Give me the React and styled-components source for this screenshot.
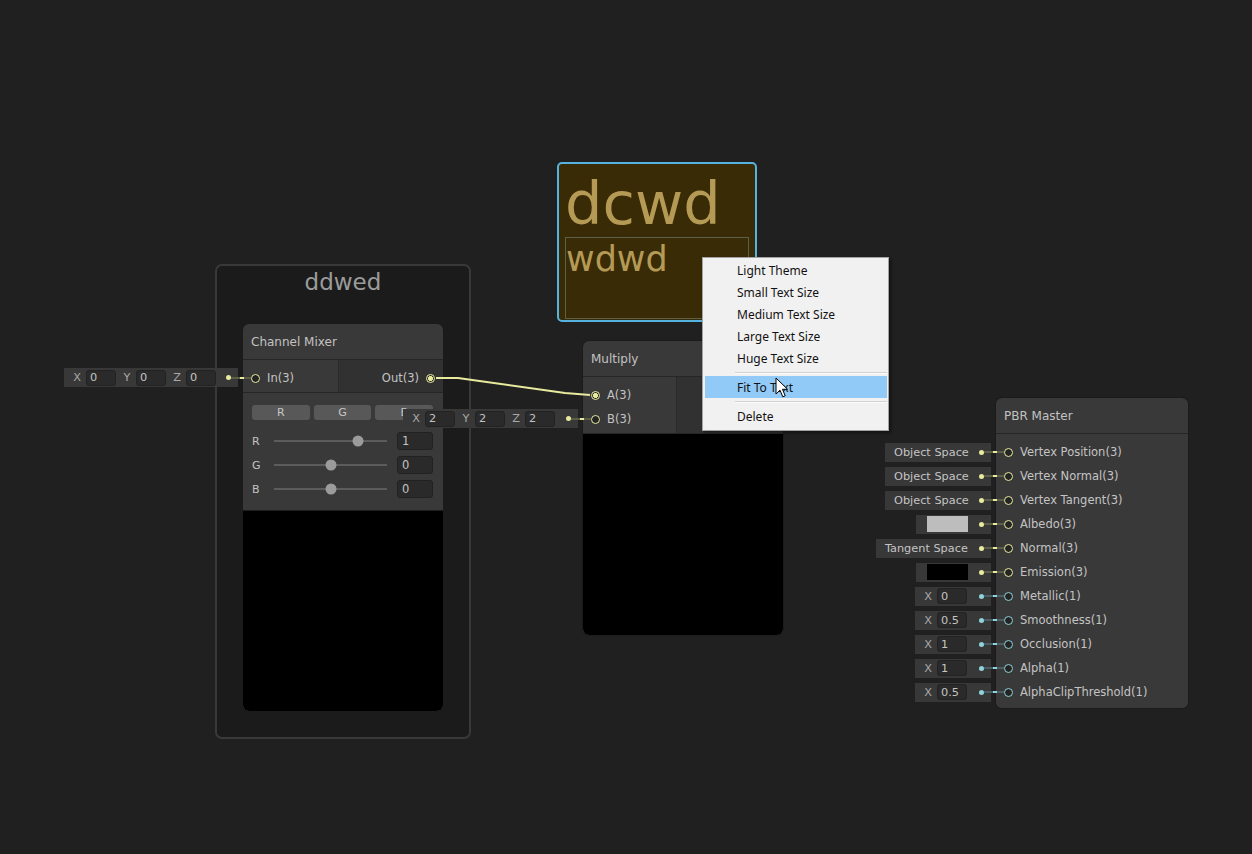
import React from "react";
import styled, { createGlobalStyle } from "styled-components";

const YELLOW = "#e8eb9e";
const YELLOW_DIM = "#5d5e48";
const CYAN = "#8fd3dc";
const CYAN_DIM = "#4a5e61";

const GlobalStyle = createGlobalStyle`
  html, body { margin: 0; padding: 0; background: #202020; }
  body { font-family: "DejaVu Sans", Verdana, sans-serif; }
  *, *::before, *::after { box-sizing: border-box; }
`;

const Canvas = styled.div`
  position: relative;
  width: 1252px;
  height: 854px;
  overflow: hidden;
  background: #202020;
  font-family: "DejaVu Sans", Verdana, sans-serif;
  color: #c4c4c4;
`;

/* ---------- group ---------- */
const Group = styled.div`
  position: absolute;
  left: ${(p) => p.$x}px;
  top: ${(p) => p.$y}px;
  width: ${(p) => p.$w}px;
  height: ${(p) => p.$h}px;
  background: #1b1b1b;
  border: 2px solid #393939;
  border-radius: 7px;
  display: flex;
  justify-content: center;
  padding-top: 5px;
`;
const GroupTitle = styled.div`
  font-size: 23px;
  line-height: 1;
  color: #9b9b9b;
`;

/* ---------- node ---------- */
const Node = styled.div`
  position: absolute;
  left: ${(p) => p.$x}px;
  top: ${(p) => p.$y}px;
  width: ${(p) => p.$w}px;
  height: ${(p) => (p.$h ? `${p.$h}px` : "auto")};
  display: flex;
  flex-direction: column;
  background: #393939;
  border-radius: 6px;
  overflow: hidden;
  box-shadow: 0 0 0 1px #1b1b1b;
`;
const NodeTitle = styled.div`
  height: 36px;
  flex: none;
  display: flex;
  align-items: center;
  padding: 1px 8px 0;
  font-size: 12px;
  color: #c2c2c2;
  border-bottom: 1px solid #262626;
`;
const Ports = styled.div`
  display: flex;
  flex: none;
  border-bottom: ${(p) => (p.$last ? "none" : "1px solid #262626")};
`;
const InputCol = styled.div`
  width: ${(p) => (p.$w ? `${p.$w}px` : "100%")};
  display: flex;
  flex-direction: column;
  padding: 6px 0 ${(p) => (p.$pb ?? 2)}px;
  background: #393939;
  border-right: ${(p) => (p.$w ? "1px solid #2a2a2a" : "none")};
`;
const OutputCol = styled.div`
  flex: 1;
  display: flex;
  flex-direction: column;
  align-items: flex-end;
  padding: 6px 0 2px;
  background: #313131;
`;
const PortRow = styled.div`
  height: 24px;
  display: flex;
  flex-direction: ${(p) => (p.$out ? "row-reverse" : "row")};
  align-items: center;
  gap: 7px;
  padding: 0 8px;
  font-size: 11.5px;
  color: #c4c4c4;
  white-space: nowrap;
`;
const PortCircle = styled.span`
  flex: none;
  width: 9px;
  height: 9px;
  border-radius: 50%;
  border: 1.5px solid ${(p) => p.$c};
  background: ${(p) =>
    p.$on
      ? `radial-gradient(circle, ${p.$c} 0 2.2px, #2a2a2a 2.7px)`
      : "#242424"};
`;

const Controls = styled.div`
  display: flex;
  flex-direction: column;
  padding: 12px 10px 9px 9px;
  border-bottom: 1px solid #1c1c1c;
`;
const ButtonRow = styled.div`
  display: flex;
  gap: 4px;
  margin-bottom: 9px;
`;
const ToggleBtn = styled.div`
  flex: 1;
  height: 15px;
  border-radius: 3px;
  background: #585858;
  font-size: 11px;
  color: #c6c6c6;
  display: flex;
  align-items: center;
  justify-content: center;
`;
const SliderRow = styled.div`
  height: 24px;
  display: flex;
  align-items: center;
  font-size: 11px;
  color: #c4c4c4;
`;
const SliderLabel = styled.span`
  width: 22px;
  flex: none;
`;
const Track = styled.div`
  position: relative;
  width: 113px;
  height: 2px;
  background: #5c5c5c;
  flex: none;
`;
const Thumb = styled.div`
  position: absolute;
  top: 50%;
  left: ${(p) => p.$pos * 100}%;
  width: 11px;
  height: 11px;
  border-radius: 50%;
  background: #9b9b9b;
  transform: translate(-50%, -50%);
`;
const NumBox = styled.div`
  margin-left: 10px;
  width: 37px;
  height: 18px;
  border-radius: 3px;
  background: #2a2a2a;
  border: 1px solid #212121;
  display: flex;
  align-items: center;
  padding-left: 4px;
  font-size: 11.5px;
  color: #c4c4c4;
`;
const Preview = styled.div`
  flex: 1;
  background: #000;
  border-radius: 0 0 6px 6px;
`;

/* ---------- input chips ---------- */
const Chip = styled.div`
  display: flex;
  align-items: center;
  height: 19px;
`;
const FloatChip = styled(Chip)`
  position: absolute;
  right: ${(p) => p.$right}px;
  top: ${(p) => p.$top}px;
  z-index: 3;
`;
const FieldBox = styled.div`
  width: ${(p) => p.$w}px;
  height: 19px;
  background: #383838;
  display: flex;
  align-items: center;
  gap: 4px;
  padding: 0 7px 0 ${(p) => p.$pl ?? 8}px;
  font-size: 11.3px;
  color: #c4c4c4;
  white-space: nowrap;
`;
const Axis = styled.span`
  width: 10px;
  flex: none;
  text-align: center;
  color: #a9a9a9;
  margin-left: ${(p) => (p.$first ? 0 : 2)}px;
`;
const ValueBox = styled.span`
  width: 30px;
  height: 16px;
  flex: none;
  border-radius: 3px;
  background: #2a2a2a;
  border: 1px solid #222;
  display: flex;
  align-items: center;
  padding-left: 3px;
  color: #c4c4c4;
`;
const Swatch = styled.span`
  width: 41px;
  height: 16px;
  flex: none;
  background: ${(p) => p.$c};
`;
const Dot = styled.span`
  margin-left: auto;
  width: 5px;
  height: 5px;
  flex: none;
  border-radius: 50%;
  background: ${(p) => p.$c};
`;
const Wire = styled.span`
  position: relative;
  z-index: 1;
  margin-left: -7px;
  width: ${(p) => p.$w + 7}px;
  height: 2px;
  flex: none;
  background: ${(p) => p.$dim};
  &::after {
    content: "";
    position: absolute;
    left: 50%;
    top: 0;
    width: 4px;
    height: 2px;
    margin-left: -1px;
    background: ${(p) => p.$c};
  }
`;
const ChipColumn = styled.div`
  position: absolute;
  right: ${(p) => p.$right}px;
  top: ${(p) => p.$top}px;
  display: flex;
  flex-direction: column;
  align-items: flex-end;
`;
const ChipSlot = styled.div`
  height: 24px;
  display: flex;
  align-items: center;
`;

/* ---------- edges ---------- */
const EdgeLayer = styled.svg`
  position: absolute;
  left: 0;
  top: 0;
  width: 1252px;
  height: 854px;
  pointer-events: none;
  z-index: 2;
`;

/* ---------- sticky note ---------- */
const Sticky = styled.div`
  position: absolute;
  left: ${(p) => p.$x}px;
  top: ${(p) => p.$y}px;
  width: ${(p) => p.$w}px;
  height: ${(p) => p.$h}px;
  background: #3a2b07;
  border: 2px solid #56b3df;
  border-radius: 5px;
  display: flex;
  flex-direction: column;
  padding: 10px 6px 1px 6px;
  color: #b59a55;
  z-index: 4;
`;
const StickyTitle = styled.div`
  font-size: 59px;
  line-height: 1;
  margin-left: 0;
  margin-bottom: 4px;
`;
const StickyBody = styled.div`
  flex: 1;
  border: 1px solid #5b604a;
  font-size: 35px;
  line-height: 1;
  padding: 4px 0 0 0;
`;

/* ---------- context menu ---------- */
const Menu = styled.div`
  position: absolute;
  left: ${(p) => p.$x}px;
  top: ${(p) => p.$y}px;
  width: ${(p) => p.$w}px;
  background: #f1f1f1;
  border: 1px solid #a3a3a3;
  box-shadow: 2px 2px 3px rgba(0, 0, 0, 0.45);
  padding: 1px 1px 3px 2px;
  display: flex;
  flex-direction: column;
  font-family: "Noto Sans", "Liberation Sans", sans-serif;
  font-size: 12px;
  color: #111;
  z-index: 10;
`;
const MenuItem = styled.div`
  height: 22px;
  display: flex;
  align-items: center;
  padding-left: 32px;
  background: ${(p) => (p.$active ? "#91c9f7" : "transparent")};
`;
const MenuSep = styled.div`
  height: 1px;
  margin: 3px 0 3px 30px;
  background: #d2d2d2;
  box-shadow: 0 1px 0 #fbfbfb;
`;
const Cursor = styled.svg`
  position: absolute;
  left: ${(p) => p.$x}px;
  top: ${(p) => p.$y}px;
  z-index: 11;
`;

/* ---------- data ---------- */
const pbrPorts = [
  { name: "Vertex Position(3)", c: YELLOW, field: { kind: "text", text: "Object Space", w: 106 } },
  { name: "Vertex Normal(3)", c: YELLOW, field: { kind: "text", text: "Object Space", w: 106 } },
  { name: "Vertex Tangent(3)", c: YELLOW, field: { kind: "text", text: "Object Space", w: 106 } },
  { name: "Albedo(3)", c: YELLOW, field: { kind: "swatch", color: "#bdbdbd", w: 75 } },
  { name: "Normal(3)", c: YELLOW, field: { kind: "text", text: "Tangent Space", w: 115 } },
  { name: "Emission(3)", c: YELLOW, field: { kind: "swatch", color: "#000", w: 75 } },
  { name: "Metallic(1)", c: CYAN, field: { kind: "x", value: "0", w: 76 } },
  { name: "Smoothness(1)", c: CYAN, field: { kind: "x", value: "0.5", w: 76 } },
  { name: "Occlusion(1)", c: CYAN, field: { kind: "x", value: "1", w: 76 } },
  { name: "Alpha(1)", c: CYAN, field: { kind: "x", value: "1", w: 76 } },
  { name: "AlphaClipThreshold(1)", c: CYAN, field: { kind: "x", value: "0.5", w: 76 } },
];

const sliders = [
  { label: "R", pos: 0.74, value: "1" },
  { label: "G", pos: 0.5, value: "0" },
  { label: "B", pos: 0.5, value: "0" },
];

function VectorContent({ values }) {
  return (
    <>
      {["X", "Y", "Z"].map((a, i) => (
        <React.Fragment key={a}>
          <Axis $first={i === 0}>{a}</Axis>
          <ValueBox>{values[i]}</ValueBox>
        </React.Fragment>
      ))}
    </>
  );
}

function PbrField({ field, c }) {
  const dim = c === CYAN ? CYAN_DIM : YELLOW_DIM;
  let inner;
  if (field.kind === "text") inner = <span>{field.text}</span>;
  else if (field.kind === "swatch") inner = <Swatch $c={field.color} />;
  else
    inner = (
      <>
        <Axis $first>X</Axis>
        <ValueBox>{field.value}</ValueBox>
      </>
    );
  return (
    <Chip>
      <FieldBox $w={field.w} $pl={field.kind === "text" ? 9 : field.kind === "swatch" ? 11 : 8}>
        {inner}
        <Dot $c={c} />
      </FieldBox>
      <Wire $w={13} $c={c} $dim={dim} />
    </Chip>
  );
}

export default function App() {
  return (
    <>
      <GlobalStyle />
      <Canvas>
        <Group $x={215} $y={264} $w={256} $h={475}>
          <GroupTitle>ddwed</GroupTitle>
        </Group>

        {/* Channel Mixer */}
        <Node $x={243} $y={324} $w={200} $h={387}>
          <NodeTitle>Channel Mixer</NodeTitle>
          <Ports>
            <InputCol $w={96}>
              <PortRow>
                <PortCircle $c={YELLOW} />
                In(3)
              </PortRow>
            </InputCol>
            <OutputCol>
              <PortRow $out>
                <PortCircle $c={YELLOW} $on />
                Out(3)
              </PortRow>
            </OutputCol>
          </Ports>
          <Controls>
            <ButtonRow>
              <ToggleBtn>R</ToggleBtn>
              <ToggleBtn>G</ToggleBtn>
              <ToggleBtn>B</ToggleBtn>
            </ButtonRow>
            {sliders.map((s) => (
              <SliderRow key={s.label}>
                <SliderLabel>{s.label}</SliderLabel>
                <Track>
                  <Thumb $pos={s.pos} />
                </Track>
                <NumBox>{s.value}</NumBox>
              </SliderRow>
            ))}
          </Controls>
          <Preview />
        </Node>

        <FloatChip $right={1252 - 251} $top={368}>
          <FieldBox $w={174}>
            <VectorContent values={["0", "0", "0"]} />
            <Dot $c={YELLOW} />
          </FieldBox>
          <Wire $w={13} $c={YELLOW} $dim={YELLOW_DIM} />
        </FloatChip>

        {/* Multiply */}
        <Node $x={583} $y={341} $w={200} $h={294}>
          <NodeTitle>Multiply</NodeTitle>
          <Ports>
            <InputCol $w={94}>
              <PortRow>
                <PortCircle $c={YELLOW} $on />
                A(3)
              </PortRow>
              <PortRow>
                <PortCircle $c={YELLOW} />
                B(3)
              </PortRow>
            </InputCol>
            <OutputCol />
          </Ports>
          <Preview />
        </Node>

        <EdgeLayer viewBox="0 0 1252 854">
          <polyline
            points="436,378 458,378 565,393 590,395"
            fill="none"
            stroke={YELLOW}
            strokeWidth="2"
            strokeLinejoin="round"
          />
        </EdgeLayer>

        <FloatChip $right={1252 - 591} $top={409}>
          <FieldBox $w={175}>
            <VectorContent values={["2", "2", "2"]} />
            <Dot $c={YELLOW} />
          </FieldBox>
          <Wire $w={13} $c={YELLOW} $dim={YELLOW_DIM} />
        </FloatChip>

        {/* Sticky note */}
        <Sticky $x={557} $y={162} $w={200} $h={160}>
          <StickyTitle>dcwd</StickyTitle>
          <StickyBody>wdwd</StickyBody>
        </Sticky>

        {/* PBR Master */}
        <Node $x={996} $y={398} $w={192}>
          <NodeTitle>PBR Master</NodeTitle>
          <Ports $last>
            <InputCol $pb={4}>
              {pbrPorts.map((p) => (
                <PortRow key={p.name}>
                  <PortCircle $c={p.c} />
                  {p.name}
                </PortRow>
              ))}
            </InputCol>
          </Ports>
        </Node>

        <ChipColumn $right={1252 - 1004} $top={440}>
          {pbrPorts.map((p) => (
            <ChipSlot key={p.name}>
              <PbrField field={p.field} c={p.c} />
            </ChipSlot>
          ))}
        </ChipColumn>

        {/* Context menu */}
        <Menu $x={702} $y={257} $w={187}>
          <MenuItem>Light Theme</MenuItem>
          <MenuItem>Small Text Size</MenuItem>
          <MenuItem>Medium Text Size</MenuItem>
          <MenuItem>Large Text Size</MenuItem>
          <MenuItem>Huge Text Size</MenuItem>
          <MenuSep />
          <MenuItem $active>Fit To Text</MenuItem>
          <MenuSep />
          <MenuItem>Delete</MenuItem>
        </Menu>

        <Cursor $x={775} $y={377} width="14" height="22" viewBox="0 0 14 22">
          <path
            d="M1 1 L1 17 L5 13.2 L7.8 19.8 L10.2 18.8 L7.5 12.3 L12.6 12.3 Z"
            fill="#fff"
            stroke="#000"
            strokeWidth="1"
            strokeLinejoin="round"
          />
        </Cursor>
      </Canvas>
    </>
  );
}
